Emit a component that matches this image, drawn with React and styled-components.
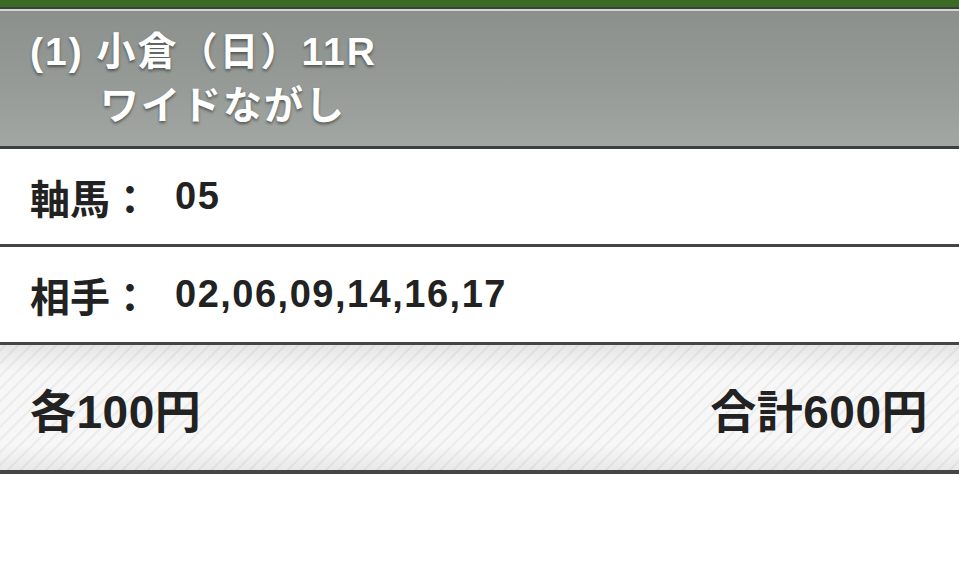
import React from 'react';
import styled, { createGlobalStyle } from 'styled-components';

const GlobalStyle = createGlobalStyle`
  html, body {
    margin: 0;
    padding: 0;
    background: #ffffff;
  }
  body {
    font-family: 'Liberation Sans', 'Noto Sans CJK JP', sans-serif;
    -webkit-font-smoothing: antialiased;
  }
`;

// Top green app bar edge
const TopBar = styled.div`
  height: 7px;
  background: #3b6b23;
  border-bottom: 2px solid #3d3f3d;
`;

const Header = styled.div`
  border-top: 2px solid #d3d6d3;
  border-bottom: 3px solid #3e403f;
  background: linear-gradient(to bottom, #8b908c 0%, #979c98 60%, #a2a7a3 100%);
  padding: 14px 30px 13px;
  color: #ffffff;
  font-weight: bold;
  font-size: 39px;
  line-height: 54px;
  letter-spacing: 2px;
  text-shadow: 0 2px 3px rgba(0, 0, 0, 0.45);
`;

const HeaderLine = styled.div`
  padding-left: ${(p) => p.indent || 0}px;
  white-space: nowrap;
`;

const Row = styled.div`
  display: flex;
  align-items: center;
  height: 95px;
  padding: 0 30px;
  border-bottom: 3px solid #444644;
  font-weight: bold;
  color: #222222;
`;

const Label = styled.span`
  width: 145px;
  flex-shrink: 0;
  font-size: 40px;
`;

const Value = styled.span`
  font-size: 38px;
  letter-spacing: 1.5px;
`;

const Footer = styled.div`
  display: flex;
  align-items: center;
  justify-content: space-between;
  height: 125px;
  padding: 0 31px 0 30px;
  border-bottom: 4px solid #444644;
  font-weight: bold;
  font-size: 46px;
  color: #222222;
  background:
    linear-gradient(to bottom, rgba(0, 0, 0, 0.07) 0%, rgba(0, 0, 0, 0) 22%, rgba(0, 0, 0, 0) 80%, rgba(0, 0, 0, 0.06) 100%),
    repeating-linear-gradient(-45deg, #f7f7f7 0px, #f7f7f7 5px, #ebebeb 6px, #ebebeb 7px, #f7f7f7 8px, #f7f7f7 9px);
`;

const Amount = styled.span`
  letter-spacing: 0.5px;
`;

const App = () => {
  return (
    <>
      <GlobalStyle />
      <TopBar />
      <Header>
        <HeaderLine>(1) 小倉（日）11R</HeaderLine>
        <HeaderLine indent={70}>ワイドながし</HeaderLine>
      </Header>
      <Row>
        <Label>軸馬：</Label>
        <Value>05</Value>
      </Row>
      <Row>
        <Label>相手：</Label>
        <Value>02,06,09,14,16,17</Value>
      </Row>
      <Footer>
        <Amount>各100円</Amount>
        <Amount>合計600円</Amount>
      </Footer>
    </>
  );
};

export default App;
